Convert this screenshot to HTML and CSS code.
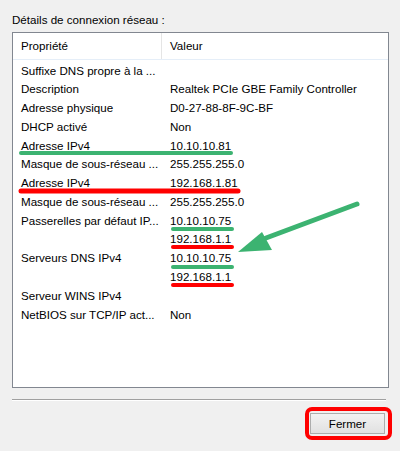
FILE: index.html
```html
<!DOCTYPE html>
<html lang="fr">
<head>
  <meta charset="UTF-8" />
  <title>Détails de connexion réseau</title>
  <link rel="stylesheet" href="styles.css">
</head>
<body>

<div class="dialog">
  <div class="caption">Détails de connexion réseau :</div>

  <div class="listbox">
    <div class="row head">
      <span class="c1">Propriété</span>
      <span class="c2">Valeur</span>
    </div>
    <div class="rows">
      <div class="row"><span class="c1">Suffixe DNS propre à la ...</span><span class="c2"></span></div>
      <div class="row"><span class="c1">Description</span><span class="c2">Realtek PCIe GBE Family Controller</span></div>
      <div class="row"><span class="c1">Adresse physique</span><span class="c2">D0-27-88-8F-9C-BF</span></div>
      <div class="row"><span class="c1">DHCP activé</span><span class="c2">Non</span></div>
      <div class="row"><span class="c1">Adresse IPv4</span><span class="c2">10.10.10.81</span></div>
      <div class="row"><span class="c1">Masque de sous-réseau ...</span><span class="c2">255.255.255.0</span></div>
      <div class="row"><span class="c1">Adresse IPv4</span><span class="c2">192.168.1.81</span></div>
      <div class="row"><span class="c1">Masque de sous-réseau ...</span><span class="c2">255.255.255.0</span></div>
      <div class="row"><span class="c1">Passerelles par défaut IP...</span><span class="c2">10.10.10.75</span></div>
      <div class="row"><span class="c1"></span><span class="c2">192.168.1.1</span></div>
      <div class="row"><span class="c1">Serveurs DNS IPv4</span><span class="c2">10.10.10.75</span></div>
      <div class="row"><span class="c1"></span><span class="c2">192.168.1.1</span></div>
      <div class="row"><span class="c1">Serveur WINS IPv4</span><span class="c2"></span></div>
      <div class="row"><span class="c1">NetBIOS sur TCP/IP act...</span><span class="c2">Non</span></div>
    </div>
  </div>

  <div class="sep"></div>

  <div class="actions">
    <button type="button">Fermer</button>
  </div>

  <!-- annotations drawn over the dialog -->
  <svg class="marks" width="400" height="451" viewBox="0 0 400 451">
    <g stroke-linecap="round" fill="none">
      <line x1="21" y1="153" x2="231" y2="153" stroke="#3cb371" stroke-width="4"/>
      <line x1="21" y1="191" x2="238" y2="191" stroke="#ff0000" stroke-width="5"/>
      <line x1="173" y1="229" x2="232" y2="229" stroke="#3cb371" stroke-width="4"/>
      <line x1="173" y1="247" x2="232" y2="247" stroke="#ff0000" stroke-width="4"/>
      <line x1="173" y1="267" x2="232" y2="267" stroke="#3cb371" stroke-width="4"/>
      <line x1="173" y1="285" x2="232" y2="285" stroke="#ff0000" stroke-width="4"/>
      <line x1="357" y1="204" x2="266" y2="238" stroke="#3cb371" stroke-width="5"/>
      <rect x="307" y="409" width="83" height="29" rx="5" stroke="#ff0000" stroke-width="4"/>
    </g>
    <polygon points="238,252 262,232 272,250" fill="#3cb371"/>
  </svg>
</div>

</body>
</html>
```

FILE: styles.css
```css
body {
  margin: 0;
  background: #f0f0f0;
  font-family: 'Liberation Sans', Arial, sans-serif;
  font-size: 11.6px;
  color: #000;
}
.dialog {
  position: relative;
  width: 400px;
  height: 451px;
  padding: 12px 0 0 12px;
  box-sizing: border-box;
}
.caption {
  line-height: 16px;
  margin-bottom: 4px;
}
.listbox {
  width: 377px;
  height: 356px;
  box-sizing: border-box;
  border: 1px solid #828790;
  background: #fff;
}
.row {
  display: flex;
  height: 18.77px;
  line-height: 18.77px;
  white-space: nowrap;
}
.row .c1 {
  width: 149px;
  padding-left: 8px;
  box-sizing: border-box;
}
.row .c2 {
  padding-left: 8px;
}
.row.head {
  height: 27px;
  line-height: 26px;
  border-bottom: 1px solid #e5eef8;
  box-sizing: border-box;
}
.row.head .c1 {
  border-right: 1px solid #e5e5e5;
}
.rows {
  padding-top: 1.6px;
}
.sep {
  width: 374px;
  margin-top: 11px;
  border-top: 1px solid #a0a0a0;
  border-bottom: 1px solid #fff;
}
.actions {
  display: flex;
  justify-content: flex-end;
  width: 374px;
  margin-top: 12px;
}
.actions button {
  width: 75px;
  height: 21px;
  margin-right: 1px;
  border: 1px solid #adadad;
  background: linear-gradient(#f2f2f2, #e1e1e1);
  font-family: 'Liberation Sans', Arial, sans-serif;
  font-size: 11.6px;
  color: #000;
  padding: 0;
}
.marks {
  position: absolute;
  left: 0;
  top: 0;
  pointer-events: none;
}
```
